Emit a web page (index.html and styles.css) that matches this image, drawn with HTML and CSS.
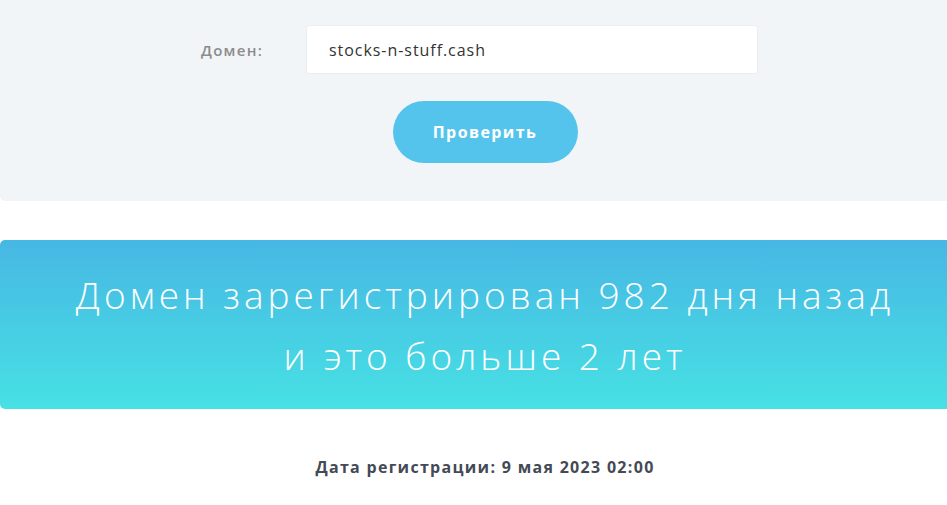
FILE: index.html
```html
<!DOCTYPE html>
<html lang="ru">
<head>
    <meta charset="UTF-8">
    <meta name="viewport" content="width=device-width, initial-scale=1.0">
    <title>Проверка возраста домена</title>
    <link rel="stylesheet" href="styles.css">
</head>
<body>
    <div class="page">
        <div class="check-panel">
            <div class="field">
                <label class="field-label" for="domain">Домен:</label>
                <input class="field-input" id="domain" type="text" value="stocks-n-stuff.cash">
            </div>
            <div class="actions">
                <button class="check-btn">Проверить</button>
            </div>
        </div>

        <div class="result-banner">
            <p>Домен зарегистрирован 982 дня назад<br>и это больше 2 лет</p>
        </div>

        <p class="reg-date">Дата регистрации: 9 мая 2023 02:00</p>
    </div>
</body>
</html>
```

FILE: styles.css
```css
body {
    margin: 0;
    overflow: hidden;
    background-color: #fff;
    font-family: "Open Sans", Arial, sans-serif;
}
.page {
    width: 970px;
}
.check-panel {
    background-color: #f2f5f7;
    border-radius: 0 0 5px 5px;
    padding: 25px 0 38px;
}
.field {
    display: flex;
    align-items: center;
    justify-content: center;
    padding-right: 11px;
}
.field-label {
    width: 105px;
    font-size: 15px;
    font-weight: 600;
    letter-spacing: 1.3px;
    color: #8c8c8c;
}
.field-input {
    box-sizing: border-box;
    width: 452px;
    height: 49px;
    padding: 0 22px;
    border: 1px solid #ebeef0;
    border-radius: 3px;
    background-color: #fff;
    font-family: inherit;
    font-size: 16px;
    font-weight: 500;
    letter-spacing: 0.95px;
    color: #333;
    outline: none;
}
.actions {
    display: flex;
    justify-content: center;
    margin-top: 27px;
}
.check-btn {
    width: 185px;
    height: 62px;
    border: none;
    border-radius: 31px;
    background-color: #55c4ed;
    color: #fff;
    font-family: inherit;
    font-size: 16px;
    font-weight: 700;
    letter-spacing: 1.4px;
    cursor: pointer;
}
.result-banner {
    margin-top: 39px;
    height: 169px;
    box-sizing: border-box;
    padding-top: 24px;
    border-radius: 5px 0 0 5px;
    background: linear-gradient(to bottom, #47b7e4, #47e1e4);
    text-align: center;
    color: #fff;
}
.result-banner p {
    margin: 0;
    font-size: 37px;
    font-weight: 300;
    letter-spacing: 4px;
    line-height: 61px;
}
.reg-date {
    margin: 47px 0 0;
    text-align: center;
    font-size: 16px;
    font-weight: 700;
    letter-spacing: 1.3px;
    color: #444a55;
}
```
